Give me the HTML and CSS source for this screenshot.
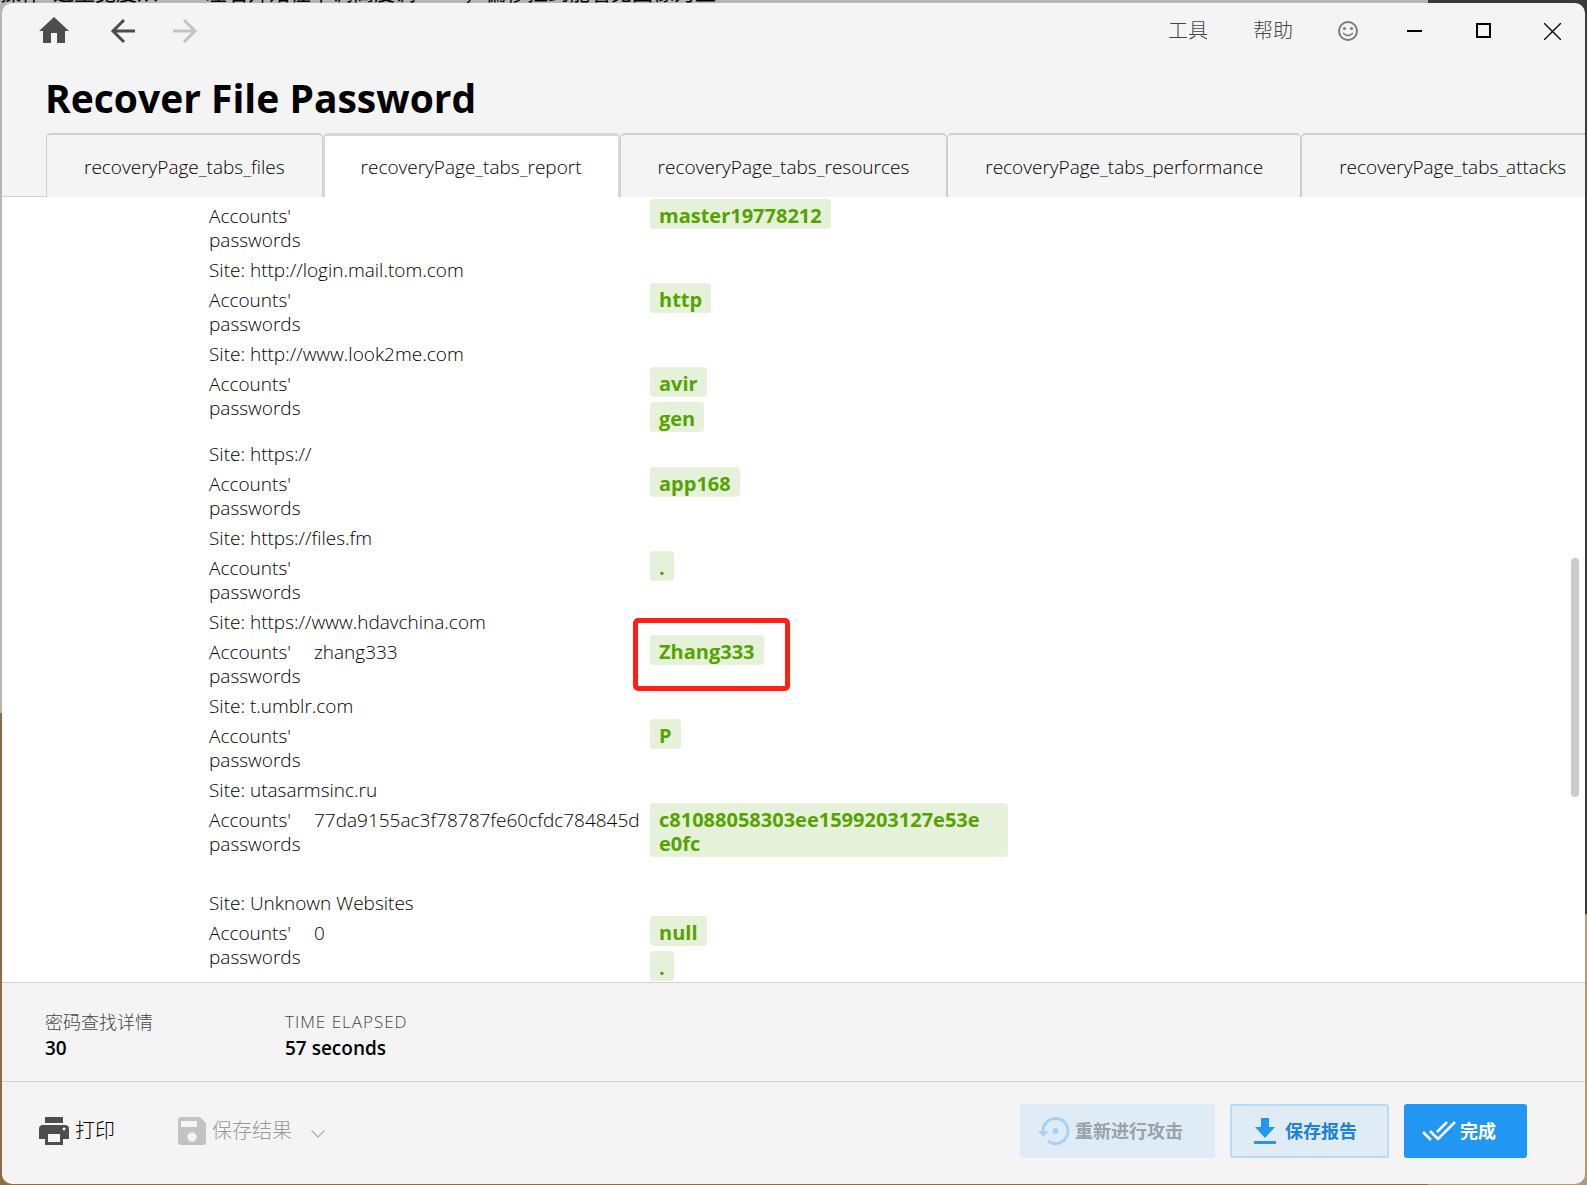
FILE: index.html
```html
<!DOCTYPE html>
<html lang="zh-CN">
<head>
<meta charset="utf-8">
<title>Recover File Password</title>
<link rel="stylesheet" href="styles.css">
</head>
<body>
<p class="desktop-note">操作: 这里宽度从2000左右开始往下调高度调2000，偏移拉到能看见图像为止</p>
<div class="window">
  <header class="titlebar">
    <nav class="nav">
      <button class="icon-btn" aria-label="Home"><svg width="30" height="28" viewBox="0 0 30 28"><path fill="#4d4d4d" d="M15 0 30 14H26V26H18V16H12V26H4V14H0Z"/></svg></button>
      <button class="icon-btn" aria-label="Back"><svg width="26" height="26" viewBox="0 0 26 26"><path fill="none" stroke="#4d4d4d" stroke-width="3" d="M14 2 3 13 14 24M3 13H25"/></svg></button>
      <button class="icon-btn" aria-label="Forward" disabled><svg width="26" height="26" viewBox="0 0 26 26"><path fill="none" stroke="#c3c3c3" stroke-width="3" d="M12 2 23 13 12 24M23 13H1"/></svg></button>
    </nav>
    <div class="menus">
      <button class="menu">工具</button>
      <button class="menu">帮助</button>
      <button class="icon-btn" aria-label="Feedback"><svg width="20" height="20" viewBox="0 0 20 20"><circle cx="10" cy="10" r="9" fill="none" stroke="#7c7c7c" stroke-width="2"/><circle cx="6.500" cy="7.500" r="1.500" fill="#7c7c7c"/><circle cx="13.500" cy="7.500" r="1.500" fill="#7c7c7c"/><path d="M5 12q5 5 10 0" fill="none" stroke="#7c7c7c" stroke-width="1.500"/></svg></button>
    </div>
    <div class="controls">
      <button class="icon-btn" aria-label="Minimize"><svg width="17" height="17" viewBox="0 0 17 17"><path fill="#000" d="M1 7h15v2H1z"/></svg></button>
      <button class="icon-btn" aria-label="Maximize"><svg width="17" height="17" viewBox="0 0 17 17"><path fill="none" stroke="#000" stroke-width="2" d="M2 1h13v13H2z"/></svg></button>
      <button class="icon-btn" aria-label="Close"><svg width="17" height="17" viewBox="0 0 17 17"><path fill="none" stroke="#000" stroke-width="1.300" d="M0 0 17 17M17 0 0 17"/></svg></button>
    </div>
  </header>
  <h1>Recover File Password</h1>
  <div class="tabs" role="tablist">
    <button class="tab" role="tab">recoveryPage_tabs_files</button>
    <button class="tab active" role="tab" aria-selected="true">recoveryPage_tabs_report</button>
    <button class="tab" role="tab">recoveryPage_tabs_resources</button>
    <button class="tab" role="tab">recoveryPage_tabs_performance</button>
    <button class="tab" role="tab">recoveryPage_tabs_attacks</button>
  </div>
  <main class="report">
    <table>
      <colgroup><col class="col-label"><col class="col-name"><col></colgroup>
      <tbody>
      <tr class="account"><th>Accounts' passwords</th><td></td><td><span class="chip">master19778212</span></td></tr>
      <tr class="site"><th colspan="3">Site: http://login.mail.tom.com</th></tr>
      <tr class="account"><th>Accounts' passwords</th><td></td><td><span class="chip">http</span></td></tr>
      <tr class="site"><th colspan="3">Site: http://www.look2me.com</th></tr>
      <tr class="account"><th>Accounts' passwords</th><td></td><td><span class="chip">avir</span><span class="chip">gen</span></td></tr>
      <tr class="site"><th colspan="3">Site: https://</th></tr>
      <tr class="account"><th>Accounts' passwords</th><td></td><td><span class="chip">app168</span></td></tr>
      <tr class="site"><th colspan="3">Site: https://files.fm</th></tr>
      <tr class="account"><th>Accounts' passwords</th><td></td><td><span class="chip">.</span></td></tr>
      <tr class="site"><th colspan="3">Site: https://www.hdavchina.com</th></tr>
      <tr class="account"><th>Accounts' passwords</th><td>zhang333</td><td><span class="chip marked">Zhang333</span></td></tr>
      <tr class="site"><th colspan="3">Site: t.umblr.com</th></tr>
      <tr class="account"><th>Accounts' passwords</th><td></td><td><span class="chip">P</span></td></tr>
      <tr class="site"><th colspan="3">Site: utasarmsinc.ru</th></tr>
      <tr class="account tall"><th>Accounts' passwords</th><td>77da9155ac3f78787fe60cfdc784845d</td><td><span class="chip">c81088058303ee1599203127e53e<wbr>e0fc</span></td></tr>
      <tr class="site"><th colspan="3">Site: Unknown Websites</th></tr>
      <tr class="account"><th>Accounts' passwords</th><td>0</td><td><span class="chip">null</span><span class="chip">.</span></td></tr>
      </tbody>
    </table>
    <div class="thumb"></div>
  </main>
  <dl class="stats">
    <div><dt>密码查找详情</dt><dd>30</dd></div>
    <div><dt class="caps">TIME ELAPSED</dt><dd>57 seconds</dd></div>
  </dl>
  <footer class="actions">
    <button class="tool"><svg width="30" height="28" viewBox="0 0 30 28"><path fill="#4d4d4d" d="M6 0h18v6H6z"/><path fill="#4d4d4d" fill-rule="evenodd" d="M4 8h22q4 0 4 4v10h-6v6H6v-6H0V12q0-4 4-4ZM9 17v8h12v-8ZM25 10.500a1.500 1.500 0 1 0 .01 0Z"/></svg>打印</button>
    <button class="tool save" disabled><svg width="28" height="28" viewBox="0 0 28 28"><path fill="#c3c3c3" fill-rule="evenodd" d="M3 0h19l6 6v19q0 3-3 3H3q-3 0-3-3V3q0-3 3-3ZM3 4v6h16V4ZM14 15.500a4.500 4.500 0 1 0 .01 0Z"/></svg>保存结果<svg class="chevron" width="14" height="8" viewBox="0 0 14 8"><path fill="none" stroke="#b0b0b0" stroke-width="1.300" d="M.5.5 7 7 13.500.5"/></svg></button>
    <div class="buttons">
      <button class="btn" disabled><svg width="32" height="28" viewBox="0 0 32 28"><path fill="none" stroke="#a6d2f6" stroke-width="3" d="M5 14A12.500 12.500 0 1 1 10 24"/><path fill="#a6d2f6" d="M0 14h11l-5.500 6Z"/><circle cx="17.500" cy="14" r="3" fill="#a6d2f6"/></svg>重新进行攻击</button>
      <button class="btn outline"><svg width="22" height="26" viewBox="0 0 22 26"><path fill="#2196f3" d="M7 0h8v9h6L11 20 1 9h6zM0 23h22v3H0z"/></svg>保存报告</button>
      <button class="btn primary"><svg width="34" height="20" viewBox="0 0 34 20"><path fill="none" stroke="#fff" stroke-width="2.600" d="M1 11 9 19M8 10 16 18 33 1M15 11 25 1"/></svg>完成</button>
    </div>
  </footer>
</div>
</body>
</html>
```
FILE: styles.css
```css
* { box-sizing: border-box; }

body {
  margin: 0;
  height: 100vh;
  padding: 3px 2px 1px;
  background: linear-gradient(#b5b5b5 0 713px, #8f6a48 713px) left / 90% 100% no-repeat, linear-gradient(#38393b 0 914px, #b09a80 914px);
  color: #000;
  font: 300 19px/24px "Open Sans", "Noto Sans CJK SC", sans-serif;
  overflow: hidden;
}

button { margin: 0; padding: 0; border: 0; background: none; color: inherit; font: inherit; }
svg { display: block; flex: none; }

.desktop-note {
  position: absolute;
  bottom: calc(100% - 5px);
  left: 0;
  margin: 0;
  font-size: 21px;
  font-weight: 400;
  line-height: 26px;
  white-space: nowrap;
}

.window {
  position: relative;
  display: flex;
  flex-direction: column;
  height: 100%;
  border-radius: 10px;
  background: #f4f4f4;
  overflow: hidden;
}

.titlebar { display: flex; align-items: center; height: 56px; padding: 0 24px 0 37px; }
.nav { display: flex; align-items: center; gap: 36px; }
.nav .icon-btn:first-child { margin-right: 5px; }
.menus { display: flex; align-items: center; gap: 45px; margin-left: auto; color: #444; font-size: 20px; }
.controls { display: flex; gap: 52px; margin-left: 48px; }

h1 { margin: 13px 0 9px 43px; font-size: 39px; line-height: 52px; font-weight: 700; }

.tabs { display: flex; flex: none; height: 64px; }
.tabs::before { content: ""; flex: none; width: 44px; border-bottom: 1px solid #d2d2d2; }
.tab {
  flex: none;
  height: 64px;
  padding: 2px 37px 0;
  border: 2px solid #cfcfcf;
  border-width: 2px 1px 0;
  border-radius: 5px 5px 0 0;
  white-space: nowrap;
}
.tab.active { padding: 1px 36px 0; border-width: 3px 2px 0; border-color: #d8d8d8; background: #fff; }

.report { position: relative; flex: 1; min-height: 0; padding: 2px 0 0 207px; background: #fff; overflow: hidden; }

table { width: 100%; table-layout: fixed; border-collapse: collapse; }
.col-label { width: 105px; }
.col-name { width: 336px; }
th, td { padding: 5px 0 0; text-align: left; vertical-align: top; font-weight: 350; }
td:last-child { padding: 0; }
.site { height: 30px; }
.site th { padding-bottom: 1px; }
.account { height: 54px; }
.tall { height: 83px; }

.chip {
  position: relative;
  display: block;
  width: fit-content;
  max-width: 358px;
  margin-bottom: 5px;
  padding: 5px 9px 1px;
  border-radius: 4px;
  background: #e5f1d9;
  color: #55a300;
  font-size: 20px;
  font-weight: 700;
}
.marked::after {
  content: "";
  position: absolute;
  inset: -17px -26px -26px -17px;
  border: 5px solid #ff2014;
  border-radius: 5px;
}

.thumb { position: absolute; top: 361px; right: 6px; width: 8px; height: 239px; border-radius: 4px; background: #cbcbcb; }

.stats { display: flex; margin: 0; padding: 26px 43px 20px; border-top: 1px solid #d2d2d2; }
.stats div { width: 240px; }
.stats dt { line-height: 26px; font-size: 18px; color: #444; }
.stats dt.caps { font-size: 17px; letter-spacing: 1px; }
.stats dd { margin: 0; line-height: 26px; font-weight: 600; }

.actions { display: flex; align-items: center; padding: 22px 58px 26px 37px; border-top: 1px solid #cfcfcf; }
.tool { display: flex; align-items: center; gap: 6px; font-size: 20px; }
.save { margin-left: 63px; color: #999; }
.chevron { margin: 6px 0 0 13px; }
.buttons { display: flex; gap: 15px; margin-left: auto; }
.btn {
  display: flex;
  align-items: center;
  gap: 5px;
  height: 54px;
  padding: 0 32px 0 18px;
  border-radius: 3px;
  background: #dfebf5;
  color: #98a2aa;
  font-size: 18px;
  font-weight: 700;
}
.outline { gap: 9px; padding: 0 30px 0 22px; border: 2px solid #b8dbf7; color: #1e82d6; }
.primary { gap: 4px; padding: 0 31px 0 18px; background: #2196f3; color: #fff; }
```
